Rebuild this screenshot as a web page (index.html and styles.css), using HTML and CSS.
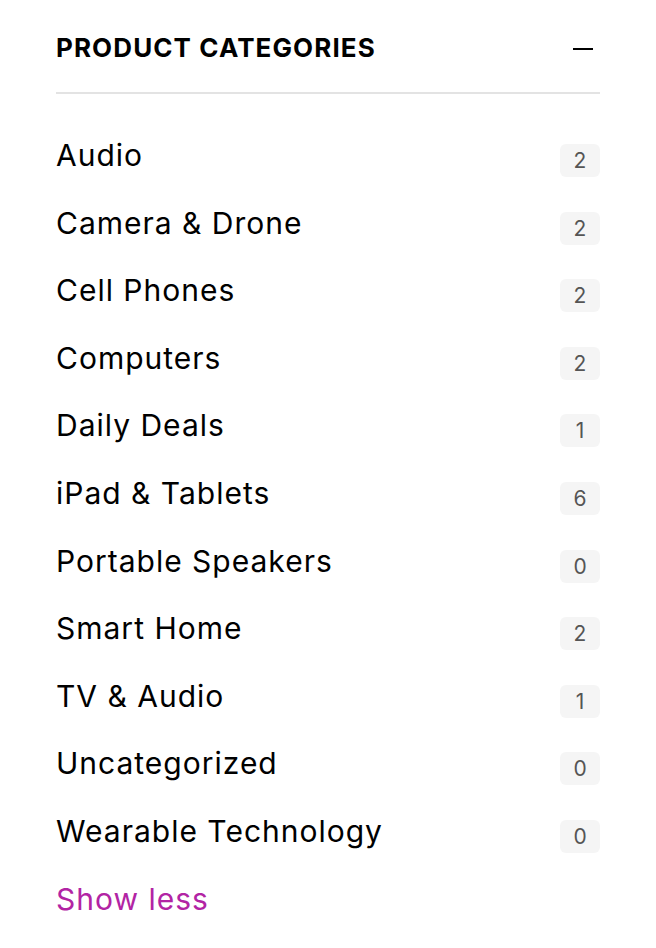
FILE: index.html
```html
<!DOCTYPE html>
<html lang="en">
<head>
    <meta charset="UTF-8">
    <meta name="viewport" content="width=device-width, initial-scale=1.0">
    <title>Product Categories</title>
    <link rel="stylesheet" href="styles.css">
</head>
<body>
    <!-- Sidebar widget listing the product categories -->
    <div class="widget">
        <div class="widget-header">
            <h2 class="widget-title">PRODUCT CATEGORIES</h2>
            <span class="toggle"></span>
        </div>
        <ul class="cat-list">
            <li class="cat-item"><a href="#">Audio</a><span class="count">2</span></li>
            <li class="cat-item"><a href="#">Camera &amp; Drone</a><span class="count">2</span></li>
            <li class="cat-item"><a href="#">Cell Phones</a><span class="count">2</span></li>
            <li class="cat-item"><a href="#">Computers</a><span class="count">2</span></li>
            <li class="cat-item"><a href="#">Daily Deals</a><span class="count">1</span></li>
            <li class="cat-item"><a href="#">iPad &amp; Tablets</a><span class="count">6</span></li>
            <li class="cat-item"><a href="#">Portable Speakers</a><span class="count">0</span></li>
            <li class="cat-item"><a href="#">Smart Home</a><span class="count">2</span></li>
            <li class="cat-item"><a href="#">TV &amp; Audio</a><span class="count">1</span></li>
            <li class="cat-item"><a href="#">Uncategorized</a><span class="count">0</span></li>
            <li class="cat-item"><a href="#">Wearable Technology</a><span class="count">0</span></li>
        </ul>
        <a href="#" class="show-less">Show less</a>
    </div>
</body>
</html>
```

FILE: styles.css
```css
/* General page style */

body {
    font-family: Inter, "Noto Sans", sans-serif;
    background-color: #fff;
    color: #000;
    margin: 0;
    padding: 0;
}

.widget {
    padding: 30px 56px 20px 56px;
}

.widget-header {
    display: flex;
    align-items: center;
    justify-content: space-between;
    padding-bottom: 26px;
    border-bottom: 2px solid #e3e3e3;
}

.widget-title {
    font-size: 26px;
    font-weight: 700;
    line-height: 36px;
    margin: 0;
    letter-spacing: 1.1px;
}

.toggle {
    display: block;
    width: 20px;
    height: 2px;
    background-color: #000;
    margin-right: 7px;
    margin-top: 2px;
}

.cat-list {
    list-style: none;
    margin: 39px 0 0 0;
    padding: 0;
}

.cat-item {
    display: flex;
    align-items: center;
    justify-content: space-between;
    height: 45px;
    margin-bottom: 22.6px;
}

.cat-item a {
    color: #000;
    text-decoration: none;
    font-size: 30px;
    line-height: 45px;
    letter-spacing: 1px;
}

.count {
    display: flex;
    align-items: center;
    justify-content: center;
    width: 40px;
    height: 33px;
    margin-top: 10px;
    border-radius: 6px;
    background-color: #f5f5f5;
    color: #555;
    font-size: 21px;
}

.show-less {
    display: block;
    color: #b224a4;
    text-decoration: none;
    font-size: 30px;
    line-height: 45px;
    letter-spacing: 1px;
}
```
